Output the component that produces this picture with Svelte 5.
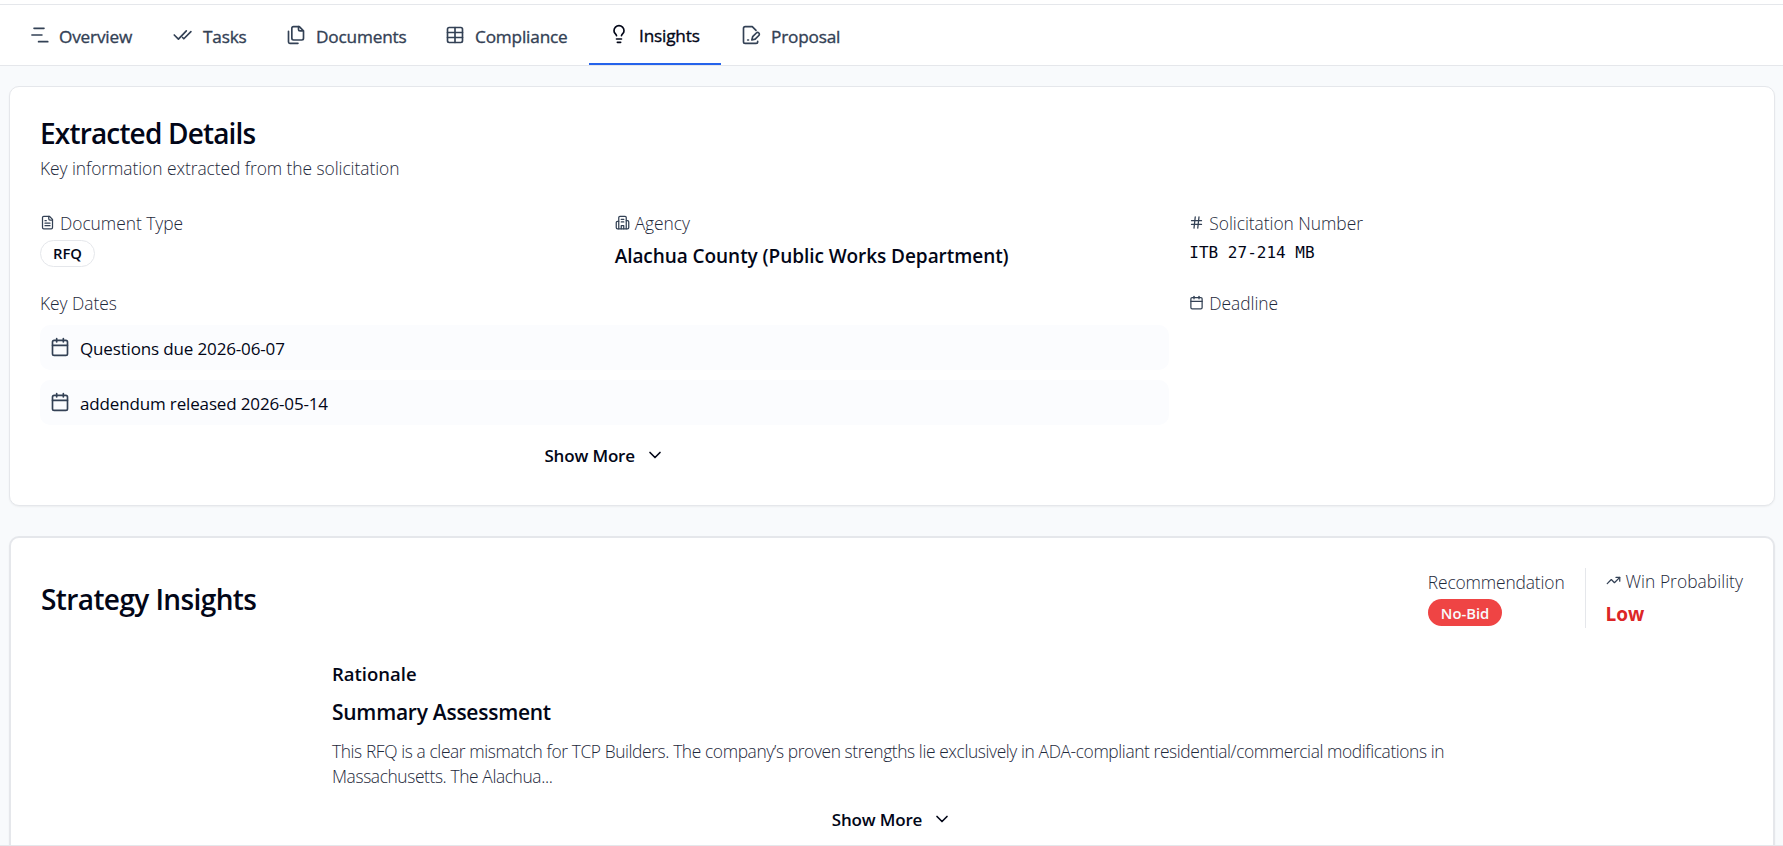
<script>
  const tabs = [
    { name: 'Overview', icon: 'overview' },
    { name: 'Tasks', icon: 'tasks' },
    { name: 'Documents', icon: 'documents' },
    { name: 'Compliance', icon: 'table' },
    { name: 'Insights', icon: 'bulb' },
    { name: 'Proposal', icon: 'proposal' }
  ];

  // 24x24 stroke icons
  const icons = {
    overview: ['M6 4h12', 'M3.5 12h12', 'M11.5 20h11'],
    tasks: ['M1.5 12l5 5L16 7', 'M21.5 8L13 16.5 11.5 15'],
    documents: [
      'M20 7h-3a2 2 0 0 1-2-2V2',
      'M9 18a2 2 0 0 1-2-2V4a2 2 0 0 1 2-2h7l5 5v9a2 2 0 0 1-2 2Z',
      'M3 7.6v12.8A1.6 1.6 0 0 0 4.6 22h9.8'
    ],
    table: ['M12 3v18', 'M5 3h14a2 2 0 0 1 2 2v14a2 2 0 0 1-2 2H5a2 2 0 0 1-2-2V5a2 2 0 0 1 2-2Z', 'M3 9h18', 'M3 15h18'],
    bulb: [
      'M15 14c.2-1 .7-1.7 1.5-2.5 1-.9 1.5-2.2 1.5-3.5A6 6 0 0 0 6 8c0 1 .2 2.2 1.5 3.5.7.7 1.3 1.5 1.5 2.5',
      'M9 18h6',
      'M10 22h4'
    ],
    proposal: [
      'M20 19.5v.5a2 2 0 0 1-2 2H5a2 2 0 0 1-2-2V4a2 2 0 0 1 2-2h8.5L18 6.5',
      'M8 18h1',
      'M18.4 9.6a2 2 0 0 1 3 3L17 17l-4 1 1-4Z'
    ],
    file: ['M15 2H6a2 2 0 0 0-2 2v16a2 2 0 0 0 2 2h12a2 2 0 0 0 2-2V7Z', 'M14 2v4a2 2 0 0 0 2 2h4', 'M10 9H8', 'M16 13H8', 'M16 17H8'],
    building: [
      'M6 22V4a2 2 0 0 1 2-2h8a2 2 0 0 1 2 2v18',
      'M6 10H4a2 2 0 0 0-2 2v8a2 2 0 0 0 2 2h16a2 2 0 0 0 2-2v-9a2 2 0 0 0-2-2h-2',
      'M10 7h4',
      'M10 11h4',
      'M10 22v-5h4v5'
    ],
    hash: ['M4 9h16', 'M4 15h16', 'M10 3L8 21', 'M16 3l-2 18'],
    calendar: ['M8 2v4', 'M16 2v4', 'M5 4h14a2 2 0 0 1 2 2v14a2 2 0 0 1-2 2H5a2 2 0 0 1-2-2V6a2 2 0 0 1 2-2Z', 'M3 10h18'],
    chevron: ['M6 9l6 6 6-6'],
    trend: ['M22 7l-8.5 8.5-5-5L2 17', 'M16 7h6v6']
  };

  const dates = ['Questions due 2026-06-07', 'addendum released 2026-05-14'];

  let active = $state('Insights');
</script>

{#snippet icon(name, size)}
  <svg class="icon" width={size} height={size} viewBox="0 0 24 24">
    {#each icons[name] as d}
      <path {d} />
    {/each}
  </svg>
{/snippet}

<div class="page">
  <nav class="tabs">
    {#each tabs as tab}
      <button class="tab" class:active={active === tab.name} onclick={() => (active = tab.name)}>
        {@render icon(tab.icon, 20)}
        <span>{tab.name}</span>
      </button>
    {/each}
  </nav>

  <main>
    <section class="card">
      <h2>Extracted Details</h2>
      <p class="subtitle">Key information extracted from the solicitation</p>

      <div class="grid">
        <div>
          <div class="label">{@render icon('file', 15)}<span>Document Type</span></div>
          <span class="badge outline">RFQ</span>
        </div>
        <div>
          <div class="label">{@render icon('building', 15)}<span>Agency</span></div>
          <div class="value">Alachua County (Public Works Department)</div>
        </div>
        <div>
          <div class="label">{@render icon('hash', 15)}<span>Solicitation Number</span></div>
          <div class="mono">ITB 27-214 MB</div>
        </div>
        <div class="wide">
          <div class="label"><span>Key Dates</span></div>
          <div class="dates">
            {#each dates as date}
              <div class="date">{@render icon('calendar', 20)}<span>{date}</span></div>
            {/each}
          </div>
          <button class="more"><span>Show More</span>{@render icon('chevron', 20)}</button>
        </div>
        <div>
          <div class="label">{@render icon('calendar', 15)}<span>Deadline</span></div>
        </div>
      </div>
    </section>

    <section class="card strategy">
      <header>
        <h2>Strategy Insights</h2>
        <div class="metrics">
          <div class="metric recommendation">
            <div class="label"><span>Recommendation</span></div>
            <span class="badge danger">No-Bid</span>
          </div>
          <div class="metric probability">
            <div class="label">{@render icon('trend', 15)}<span>Win Probability</span></div>
            <div class="value low">Low</div>
          </div>
        </div>
      </header>

      <article>
        <h3>Rationale</h3>
        <h4>Summary Assessment</h4>
        <p>
          This RFQ is a clear mismatch for TCP Builders. The company’s proven strengths lie exclusively in ADA-compliant residential/commercial modifications in Massachusetts. The Alachua...
        </p>
      </article>
      <button class="more"><span>Show More</span>{@render icon('chevron', 20)}</button>
    </section>
  </main>
</div>

<style>
  :global(body) {
    background: #f8fafc;
  }
  .page {
    box-sizing: border-box;
    height: 100vh;
    padding-top: 4px;
    overflow: hidden;
    border-bottom: 1px solid #e5e7eb;
    background: #f8fafc;
    color: #020617;
    font-family: 'Segoe UI', 'Open Sans', 'Noto Sans', sans-serif;
    font-size: 17px;
    line-height: 26px;
  }
  h2, h3, h4, p { margin: 0; }
  button {
    border: 0;
    padding: 0;
    background: none;
    color: inherit;
    font: inherit;
    cursor: pointer;
  }
  .icon {
    flex: none;
    fill: none;
    stroke: currentColor;
    stroke-width: 2;
    stroke-linecap: round;
    stroke-linejoin: round;
  }

  .tabs {
    display: grid;
    grid-template-columns: 144px 113px 159px 164px 132px 139px;
    box-sizing: border-box;
    height: 62px;
    padding-left: 9px;
    border-top: 1px solid #e5e7eb;
    border-bottom: 1px solid #e5e7eb;
    background: #fff;
    box-shadow: 0 -4px 0 #fff;
  }
  .tab {
    display: flex;
    align-items: center;
    gap: 10px;
    padding-left: 20px;
    color: #334155;
    font-size: 17.2px;
    letter-spacing: -0.17px;
    white-space: nowrap;
    -webkit-text-stroke: 0.35px currentColor;
  }
  .tab span { padding-top: 4px; }
  .tab.active {
    border-bottom: 2px solid #2563eb;
    color: #020617;
  }

  main {
    display: flex;
    flex-direction: column;
    gap: 30px;
    padding: 20px 8px 0 9px;
  }
  .card {
    border: 1px solid #e5e7eb;
    border-radius: 10px;
    padding: 30px;
    background: #fff;
    box-shadow: 0 1px 2px rgba(0, 0, 0, 0.05);
  }
  h2 {
    font-size: 28px;
    font-weight: 600;
    line-height: 32px;
    letter-spacing: -0.83px;
  }
  .subtitle {
    margin-top: 6px;
    color: #1e293b;
    font-size: 17.4px;
    font-weight: 300;
    letter-spacing: -0.06px;
  }

  .grid {
    display: grid;
    grid-template-columns: repeat(3, 1fr);
    gap: 20px;
    margin-top: 29px;
  }
  .wide { grid-column: span 2; }
  .label {
    display: flex;
    align-items: center;
    gap: 5px;
    height: 26px;
    color: #1e293b;
    font-size: 17.4px;
    font-weight: 300;
    letter-spacing: -0.04px;
    white-space: nowrap;
  }
  .label .icon {
    margin-top: -2px;
    color: #334155;
  }
  .badge {
    display: block;
    box-sizing: border-box;
    width: max-content;
    height: 27px;
    margin-top: 4px;
    border: 1px solid transparent;
    border-radius: 14px;
    padding: 0 12px;
    font-size: 14.8px;
    font-weight: 600;
    line-height: 25px;
  }
  .outline { border-color: #e5e7eb; }
  .danger {
    background: #ef4444;
    color: #f8fafc;
    line-height: 26px;
  }
  .value {
    margin-top: 5px;
    font-size: 19px;
    font-weight: 600;
    line-height: 30px;
    height: 29px;
    letter-spacing: -0.06px;
    white-space: nowrap;
  }
  .mono {
    margin-top: 4px;
    font-family: Consolas, 'DejaVu Sans Mono', monospace;
    font-size: 16px;
    line-height: 25px;
  }

  .dates {
    display: grid;
    gap: 10px;
    margin-top: 9px;
  }
  .date {
    display: flex;
    align-items: center;
    gap: 10px;
    box-sizing: border-box;
    height: 45px;
    padding: 0 10px;
    border-radius: 10px;
    background: #fbfcfe;
    letter-spacing: -0.15px;
  }
  .date .icon {
    margin-top: -1px;
    color: #334155;
  }
  .date span { padding-top: 2px; }
  .more {
    display: flex;
    align-items: center;
    justify-content: center;
    gap: 10px;
    width: 100%;
    height: 40px;
    margin-top: 10px;
    font-weight: 600;
    letter-spacing: -0.17px;
  }
  .more span { padding-top: 1px; }

  .strategy {
    height: 700px;
    border-width: 2px;
  }
  .strategy h2 {
    padding-top: 2px;
    letter-spacing: -0.6px;
  }
  header {
    display: flex;
    align-items: center;
    justify-content: space-between;
    height: 60px;
  }
  .metrics { display: flex; }
  .metric {
    box-sizing: border-box;
    height: 60px;
  }
  .recommendation {
    padding: 1px 20px 0 0;
    border-right: 1px solid #e5e7eb;
  }
  .recommendation .label { letter-spacing: -0.14px; }
  .probability { padding-left: 20px; }
  .probability .label { letter-spacing: 0.04px; }
  .low {
    color: #dc2626;
    font-weight: 700;
  }

  article {
    width: 1120px;
    margin: 32px auto 0;
  }
  h3 {
    font-size: 18.5px;
    font-weight: 600;
    line-height: 28px;
  }
  h4 {
    margin-top: 9px;
    font-size: 21px;
    font-weight: 600;
    line-height: 30px;
    letter-spacing: -0.26px;
  }
  article p {
    margin-top: 12px;
    color: #1e293b;
    font-size: 17.4px;
    font-weight: 300;
    line-height: 25px;
    letter-spacing: -0.4px;
  }
</style>
